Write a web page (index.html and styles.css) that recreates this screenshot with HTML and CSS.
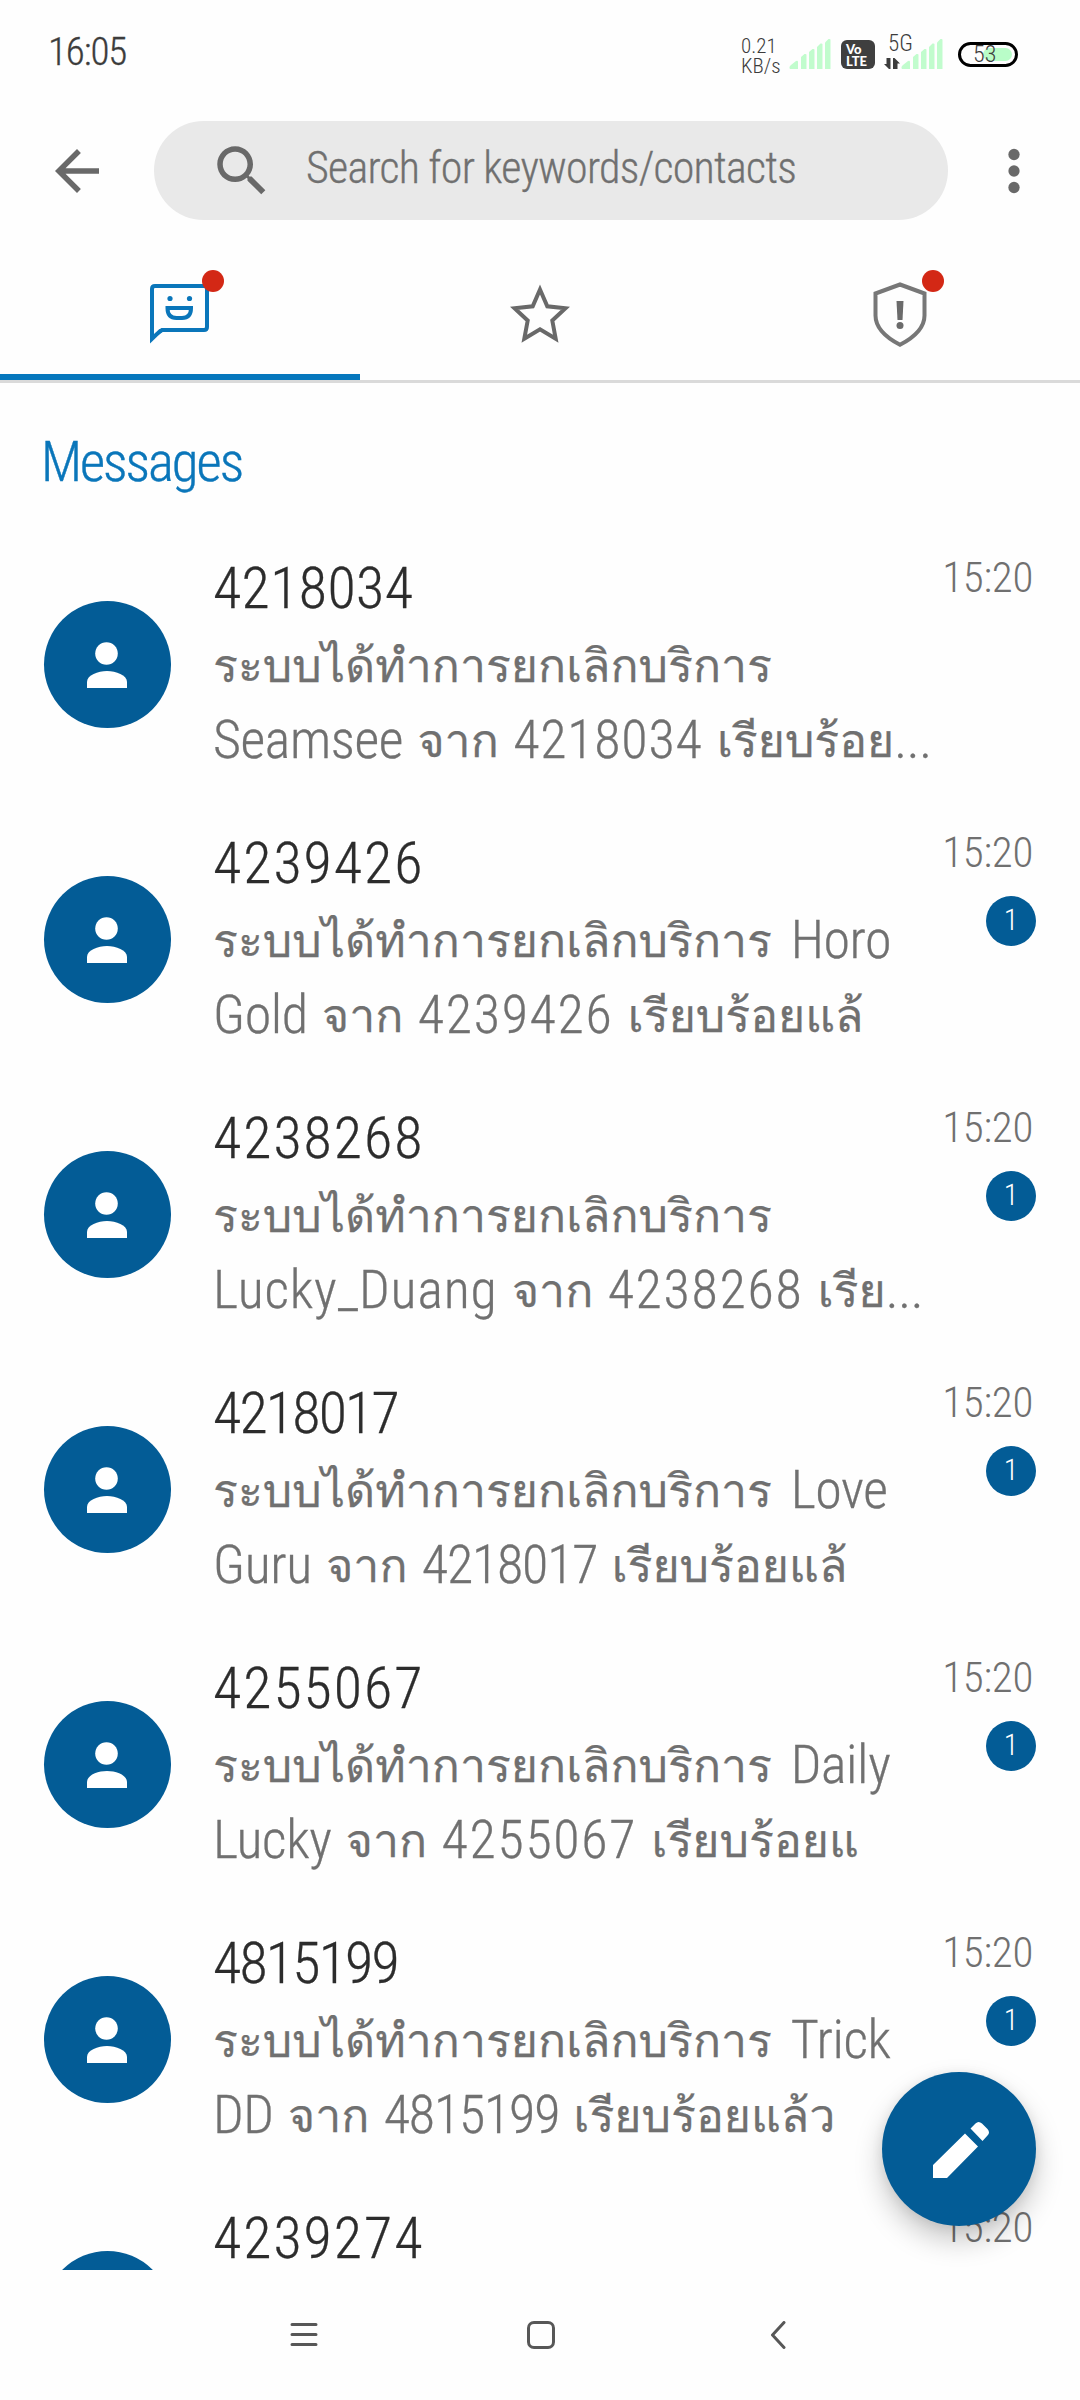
FILE: index.html
```
<!DOCTYPE html>
<html lang="en">
<head>
<meta charset="utf-8">
<title>Messages</title>
<link rel="stylesheet" href="styles.css">
</head>
<body>
<svg class="defs" aria-hidden="true">
  <symbol id="person" viewBox="0 0 40 46"><circle cx="19.500" cy="11.500" r="11.300"/><path d="M0 46v-6c0-7 11-11 20-11s20 4 20 11v6z"/></symbol>
  <symbol id="signal" viewBox="0 0 42 31"><path d="M1 31q-1.500-2 1-4l5-4q2-.8 2 1v7z"/><path d="M12 31v-12l3.500-3q2-.5 2 1v14z"/><path d="M20 31v-17l3.500-3q2-.5 2 1v19z"/><path d="M28 31v-22l3.500-3.500q2-.5 2 1v24.500z"/><path d="M36 31v-26.500l3.500-3.500q2-.5 2 1v29z"/></symbol>
</svg>
<div class="screen">
  <header class="status">
    <div class="clock">16:05</div>
    <div class="speed"><span>0.21</span><span>KB/s</span></div>
    <svg class="signal first"><use href="#signal"/></svg>
    <div class="volte"><span>Vo</span><span>LTE</span></div>
    <div class="cell">
      <span class="gen">5G</span>
      <svg class="arrows" viewBox="0 0 16 11"><path d="M0 6h2.500V0H6.500V11H5zM9 0h1.500L16 5.500h-2.500V11H9z"/></svg>
    </div>
    <svg class="signal"><use href="#signal"/></svg>
    <div class="battery"><div class="charge"></div><span>53</span></div>
  </header>

  <div class="toolbar">
    <svg class="icon" viewBox="0 0 24 24"><path d="M20 11H7.830l5.590-5.590L12 4l-8 8 8 8 1.410-1.410L7.830 13H20v-2z"/></svg>
    <div class="search">
      <svg class="icon" viewBox="0 0 24 24"><path d="M15.500 14h-.79l-.28-.27C15.410 12.590 16 11.110 16 9.500 16 5.910 13.090 3 9.500 3S3 5.910 3 9.500 5.910 16 9.500 16c1.610 0 3.090-.59 4.230-1.570l.27.28v.79l5 4.990L20.490 19l-4.990-5zm-6 0C7.010 14 5 11.990 5 9.500S7.010 5 9.500 5 14 7.010 14 9.500 11.990 14 9.500 14z"/></svg>
      <span class="placeholder">Search for keywords/contacts</span>
    </div>
    <svg class="icon more" viewBox="0 0 24 24"><circle cx="12" cy="6" r="2.050"/><circle cx="12" cy="12" r="2.050"/><circle cx="12" cy="18" r="2.050"/></svg>
  </div>

  <nav class="tabs">
    <div class="tab active">
      <div class="tab-icon">
        <svg width="60" height="66" viewBox="0 0 60 66"><path d="M2 55V7q0-3 3-3H54q3 0 3 3v38q0 3-3 3H12z" fill="none" stroke="#0a76ba" stroke-width="4"/><path d="M0 45V61.500L14 48z" fill="#0a76ba"/><path d="M4 45V52L10.500 46z" fill="#fff"/><circle cx="20" cy="16.500" r="2.600" fill="#0a76ba"/><circle cx="39.500" cy="16.500" r="2.600" fill="#0a76ba"/><path d="M17.500 26H41q0 10-9 10h-5.500q-9 0-9-10z" fill="none" stroke="#0a76ba" stroke-width="4"/></svg>
        <i class="dot"></i>
      </div>
    </div>
    <div class="tab">
      <div class="tab-icon">
        <svg width="60" height="66" viewBox="0 0 60 66"><path d="M30 7.500L37.300 24.300L55.500 26.300L42.300 38.500L45.700 56.700L30 47.300L14.300 56.700L17.700 38.500L4.500 26.300L22.700 24.300Z" fill="none" stroke="#696969" stroke-width="4"/></svg>
      </div>
    </div>
    <div class="tab">
      <div class="tab-icon">
        <svg width="60" height="66" viewBox="0 0 60 66"><path d="M30 2.500L54.500 11.500V33.500C54.500 46 43 56 30 62.800C17 56 5.500 46 5.500 33.500V11.500Z" fill="none" stroke="#777" stroke-width="4"/><path d="M26.500 19h7l-1 19h-5z" fill="#6b6b6b"/><circle cx="30" cy="43.500" r="3.500" fill="#6b6b6b"/></svg>
        <i class="dot"></i>
      </div>
    </div>
  </nav>

  <h1 class="title">Messages</h1>

  <main class="list">
    <article class="row">
      <div class="avatar"><svg><use href="#person"/></svg></div>
      <div class="body"><h2 class="name n1">4218034</h2><p class="line first"><span class="th">ระบบได้ทำการยกเลิกบริการ</span></p><p class="line">Seamsee <span class="th">จาก</span> <span class="n1">4218034</span> <span class="th">เรียบร้อย</span>...</p></div>
      <div class="meta"><time>15:20</time></div>
    </article>
    <article class="row">
      <div class="avatar"><svg><use href="#person"/></svg></div>
      <div class="body"><h2 class="name n0">4239426</h2><p class="line first"><span class="th">ระบบได้ทำการยกเลิกบริการ</span> Horo</p><p class="line">Gold <span class="th">จาก</span> <span class="n0">4239426</span> <span class="th">เรียบร้อยแล้</span></p></div>
      <div class="meta"><time>15:20</time><span class="badge">1</span></div>
    </article>
    <article class="row">
      <div class="avatar"><svg><use href="#person"/></svg></div>
      <div class="body"><h2 class="name n0">4238268</h2><p class="line first"><span class="th">ระบบได้ทำการยกเลิกบริการ</span></p><p class="line"><span class="wide">Lucky_Duang</span> <span class="th">จาก</span> <span class="n0">4238268</span> <span class="th">เรีย</span>...</p></div>
      <div class="meta"><time>15:20</time><span class="badge">1</span></div>
    </article>
    <article class="row">
      <div class="avatar"><svg><use href="#person"/></svg></div>
      <div class="body"><h2 class="name n2">4218017</h2><p class="line first"><span class="th">ระบบได้ทำการยกเลิกบริการ</span> Love</p><p class="line">Guru <span class="th">จาก</span> <span class="n2">4218017</span> <span class="th">เรียบร้อยแล้</span></p></div>
      <div class="meta"><time>15:20</time><span class="badge">1</span></div>
    </article>
    <article class="row">
      <div class="avatar"><svg><use href="#person"/></svg></div>
      <div class="body"><h2 class="name n0">4255067</h2><p class="line first"><span class="th">ระบบได้ทำการยกเลิกบริการ</span> Daily</p><p class="line">Lucky <span class="th">จาก</span> <span class="n0">4255067</span> <span class="th">เรียบร้อยแ</span></p></div>
      <div class="meta"><time>15:20</time><span class="badge">1</span></div>
    </article>
    <article class="row">
      <div class="avatar"><svg><use href="#person"/></svg></div>
      <div class="body"><h2 class="name n2">4815199</h2><p class="line first"><span class="th">ระบบได้ทำการยกเลิกบริการ</span> Trick</p><p class="line">DD <span class="th">จาก</span> <span class="n2">4815199</span> <span class="th">เรียบร้อยแล้ว</span></p></div>
      <div class="meta"><time>15:20</time><span class="badge">1</span></div>
    </article>
    <article class="row">
      <div class="avatar"><svg><use href="#person"/></svg></div>
      <div class="body"><h2 class="name n0">4239274</h2></div>
      <div class="meta"><time>15:20</time></div>
    </article>
  </main>

  <div class="fab"><svg viewBox="0 0 56 56"><path d="M0 43v13h14L45 24.500 32 11.500zM37.500 6.500l5-5q3-3 6.500 0l5.500 5.500q3 3.500 0 6.500l-5 5.500z"/></svg></div>

  <footer class="nav">
    <svg width="28" height="28" viewBox="0 0 28 28"><path d="M2 3.500H26M2 13.500H26M2 23.500H26"/></svg>
    <svg width="28" height="28" viewBox="0 0 28 28"><rect x="1.500" y="1.500" width="25" height="25" rx="5.500"/></svg>
    <svg width="28" height="28" viewBox="0 0 28 28"><path d="M20 1.500L8.500 14L20 26.500"/></svg>
  </footer>
</div>
</body>
</html>
```
FILE: styles.css
```
* { box-sizing: border-box; margin: 0; padding: 0; }
body {
  background: #fefefe;
  font-family: Roboto, Loma, sans-serif;
  font-weight: 300;
  font-stretch: 75%;
  color: #707070;
}
.defs { display: none; }
.screen { position: relative; width: 1080px; height: 2400px; display: flex; flex-direction: column; overflow: hidden; }

/* status bar */
.status { height: 104px; padding: 0 62px 0 48px; display: flex; align-items: flex-start; color: #3c3c3c; }
.clock { font-size: 39px; line-height: 50px; letter-spacing: -1.100px; margin: 27px auto 0 0; -webkit-text-stroke: .3px; }
.speed { width: 40px; margin: 36px 8px 0 0; display: flex; flex-direction: column; font-size: 21px; line-height: 20px; white-space: nowrap; }
.signal { width: 42px; height: 31px; margin-top: 38px; fill: #c1fccd; }
.signal.first { margin-right: 10px; }
.volte { width: 34px; height: 29px; margin: 40px 9px 0 0; padding: 3px 0 0 5px; border-radius: 6px; background: #3f3f3f; color: #fff; display: flex; flex-direction: column; font: 900 13px/12px Lato, sans-serif; }
.cell { width: 17px; height: 36px; margin-top: 34px; display: flex; flex-direction: column; align-items: flex-start; }
.gen { margin-left: 4px; font-size: 23px; line-height: 20px; height: 24px; white-space: nowrap; }
.arrows { width: 16px; height: 11px; fill: #3c3c3c; }
.battery { position: relative; width: 60px; height: 25px; margin: 42px 0 0 15px; padding: 3px; border: 3px solid #000; border-radius: 13px; display: flex; justify-content: flex-end; }
.charge { width: 29px; height: 100%; border-radius: 8px; background: #b9fdc8; }
.battery span { position: absolute; left: 12px; top: 0; font-size: 24px; line-height: 18px; }

/* search toolbar */
.toolbar { height: 133px; padding: 0 33px 0 44px; display: flex; align-items: center; }
.icon { width: 66px; height: 66px; fill: #696969; flex: none; }
.search { width: 794px; height: 99px; margin: 0 33px 0 44px; padding-left: 55px; border-radius: 50px; background: #e9e9e9; display: flex; align-items: center; }
.placeholder { margin: 0 0 5px 31px; font-size: 44px; line-height: 60px; letter-spacing: -.75px; white-space: nowrap; -webkit-text-stroke: .3px; }

/* tabs */
.tabs { height: 146px; display: flex; border-bottom: 3px solid #dadada; }
.tab { flex: 1; display: flex; justify-content: center; align-items: flex-start; padding-top: 45px; border-bottom: 6px solid transparent; }
.tab.active { border-color: #0577bd; }
.tab-icon { position: relative; width: 60px; height: 66px; }
.tab-icon svg { display: block; }
.dot { position: absolute; left: 52px; top: -12px; width: 22px; height: 22px; border-radius: 50%; background: #d32815; }

/* conversation list */
.title { height: 144px; padding: 42px 0 0 41px; color: #0a76ba; font-size: 55px; line-height: 74px; font-weight: 300; letter-spacing: -2.100px; -webkit-text-stroke: .4px; }
.list { height: 1743px; overflow: hidden; }
.row { height: 275px; padding: 0 44px; display: flex; align-items: center; }
.avatar { width: 127px; height: 127px; flex: none; border-radius: 50%; background: #035c96; display: flex; align-items: center; justify-content: center; }
.avatar svg { width: 40px; height: 46px; margin-right: 2px; fill: #fff; }
.body { width: 718px; height: 225px; margin-left: 42px; white-space: nowrap; }
.name { height: 75px; color: #2c2c2c; font-size: 58px; line-height: 72px; font-weight: 300; -webkit-text-stroke: .3px; }
.name.n0 { letter-spacing: 2px; }
.name.n1 { letter-spacing: .4px; }
.name.n2 { letter-spacing: -1.800px; }
.line { height: 75px; font-size: 54px; line-height: 75px; letter-spacing: -.4px; word-spacing: 2.600px; -webkit-text-stroke: .3px; }
.line.first { word-spacing: 7px; }
.line .n0 { letter-spacing: 1.700px; }
.line .n1 { letter-spacing: .8px; }
.line .n2 { letter-spacing: -1.200px; }
.line .wide { letter-spacing: .8px; }
.line .th { font-family: Loma, sans-serif; font-size: 46.400px; font-weight: 400; line-height: 1; letter-spacing: 0; vertical-align: 1px; -webkit-text-stroke: .25px; }
.meta { align-self: stretch; margin-left: auto; padding-top: 25px; display: flex; flex-direction: column; align-items: flex-end; }
.meta time { margin-right: 3px; font-size: 43px; line-height: 50px; letter-spacing: -.3px; }
.badge { width: 50px; height: 50px; margin-top: 19px; border-radius: 50%; background: #035c96; color: #fff; font-size: 30px; line-height: 47px; text-align: center; }

/* compose button, floats over the list */
.fab { position: absolute; left: 882px; top: 2072px; width: 154px; height: 154px; border-radius: 50%; background: #035c96; display: flex; align-items: center; justify-content: center; box-shadow: 0 14px 28px rgba(0, 0, 0, .22), 0 2px 12px rgba(0, 0, 0, .08); }
.fab svg { width: 56px; height: 56px; margin: 2px 0 0 3px; fill: #fff; }

/* system navigation */
.nav { height: 130px; padding: 51px 288px 0 290px; display: flex; justify-content: space-between; align-items: flex-start; }
.nav svg { fill: none; stroke: #575757; stroke-width: 3; stroke-linecap: round; stroke-linejoin: round; }
```
